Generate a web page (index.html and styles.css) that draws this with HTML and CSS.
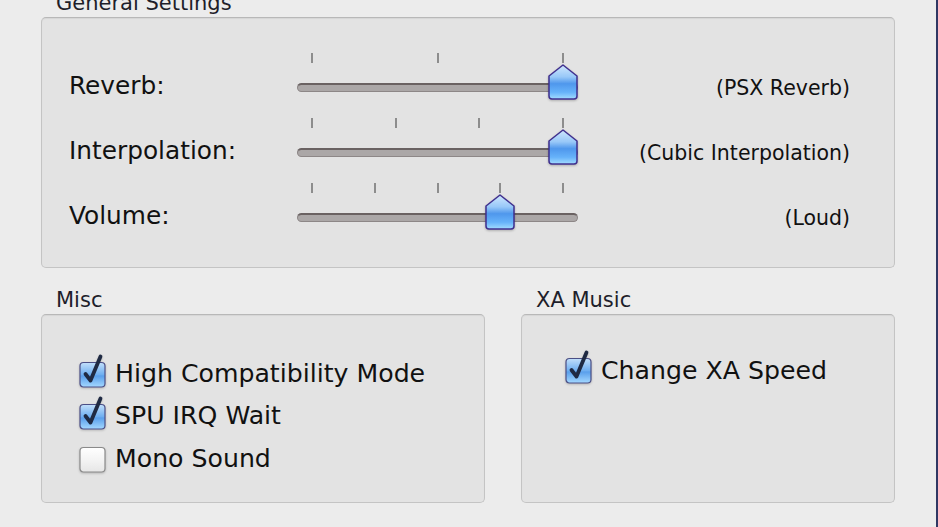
FILE: index.html
```html
<!DOCTYPE html>
<html>
<head>
<meta charset="utf-8">
<link rel="stylesheet" href="styles.css">
</head>
<body>
<div class="window">
  <section class="group">
    <div class="group-title">General Settings</div>
    <div class="box general">
      <div class="row">
        <div class="label">Reverb:</div>
        <div class="slider">
          <div class="ticks"><span></span><span></span><span></span></div>
          <div class="track"></div>
          <svg class="thumb" style="left:251px" viewBox="0 0 30 36" width="30" height="36"><use href="#thumb"/></svg>
        </div>
        <div class="value">(PSX Reverb)</div>
      </div>
      <div class="row">
        <div class="label">Interpolation:</div>
        <div class="slider">
          <div class="ticks"><span></span><span></span><span></span><span></span></div>
          <div class="track"></div>
          <svg class="thumb" style="left:251px" viewBox="0 0 30 36" width="30" height="36"><use href="#thumb"/></svg>
        </div>
        <div class="value">(Cubic Interpolation)</div>
      </div>
      <div class="row">
        <div class="label">Volume:</div>
        <div class="slider">
          <div class="ticks"><span></span><span></span><span></span><span></span><span></span></div>
          <div class="track"></div>
          <svg class="thumb" style="left:188.25px" viewBox="0 0 30 36" width="30" height="36"><use href="#thumb"/></svg>
        </div>
        <div class="value">(Loud)</div>
      </div>
    </div>
  </section>

  <div class="bottom">
    <section class="group">
      <div class="group-title">Misc</div>
      <div class="box misc">
        <div class="check"><svg class="cb" viewBox="0 0 27 27" width="27" height="27"><use href="#cb-on"/></svg><span>High Compatibility Mode</span></div>
        <div class="check"><svg class="cb" viewBox="0 0 27 27" width="27" height="27"><use href="#cb-on"/></svg><span>SPU IRQ Wait</span></div>
        <div class="check"><svg class="cb" viewBox="0 0 27 27" width="27" height="27"><use href="#cb-off"/></svg><span>Mono Sound</span></div>
      </div>
    </section>
    <section class="group">
      <div class="group-title">XA Music</div>
      <div class="box xa">
        <div class="check"><svg class="cb" viewBox="0 0 27 27" width="27" height="27"><use href="#cb-on"/></svg><span>Change XA Speed</span></div>
      </div>
    </section>
  </div>
</div>
<div class="desk-edge"></div>

<svg class="defs" width="0" height="0" aria-hidden="true">
  <defs>
    <linearGradient id="thumbGrad" x1="0" y1="0" x2="0" y2="1">
      <stop offset="0" stop-color="#d0e7fd"/>
      <stop offset="0.35" stop-color="#98c8f8"/>
      <stop offset="0.55" stop-color="#4f97ec"/>
      <stop offset="0.8" stop-color="#66b2fa"/>
      <stop offset="1" stop-color="#a3dcff"/>
    </linearGradient>
    <linearGradient id="cbGrad" x1="0" y1="0" x2="0" y2="1">
      <stop offset="0" stop-color="#c3e0fb"/>
      <stop offset="0.5" stop-color="#6eaef0"/>
      <stop offset="0.55" stop-color="#5a9feb"/>
      <stop offset="1" stop-color="#a4d8ff"/>
    </linearGradient>
    <linearGradient id="cbOffGrad" x1="0" y1="0" x2="0" y2="1">
      <stop offset="0" stop-color="#ffffff"/>
      <stop offset="0.5" stop-color="#f4f4f4"/>
      <stop offset="1" stop-color="#e6e6e6"/>
    </linearGradient>
    <g id="thumb">
      <path d="M15 1 L29 12 V32 Q29 35 26 35 H4 Q1 35 1 32 V12 Z" fill="url(#thumbGrad)" stroke="#3f2f8e" stroke-width="1.5" stroke-linejoin="round"/>
    </g>
    <g id="cb-on">
      <rect x="1" y="1.5" width="25" height="24.5" rx="3.5" fill="url(#cbGrad)" stroke="#4b4f86" stroke-width="1.2"/>
      <path d="M6.5 13 L11.5 19.5 L21.5 -4.5" fill="none" stroke="#1f2a43" stroke-width="3.8" stroke-linecap="round" stroke-linejoin="round"/>
    </g>
    <g id="cb-off">
      <rect x="1" y="1.5" width="25" height="24.5" rx="3.5" fill="url(#cbOffGrad)" stroke="#8a8a8a" stroke-width="1.2"/>
    </g>
  </defs>
</svg>
</body>
</html>
```
FILE: styles.css
```css
html, body {
  margin: 0;
  padding: 0;
  height: 100%;
}

body {
  display: flex;
  background: #ececec;
  font-family: "DejaVu Sans", Verdana, sans-serif;
  color: #111;
  overflow: hidden;
}

.window {
  flex: 1;
  margin-top: -11px;
  padding: 0 41px 0 41px;
  display: flex;
  flex-direction: column;
}

.desk-edge {
  width: 2px;
  background: #2f3763;
}

.defs {
  position: absolute;
  width: 0;
  height: 0;
}

.group {
  display: flex;
  flex-direction: column;
}

.group-title {
  font-size: 21px;
  line-height: 28px;
  height: 28px;
  padding-left: 15px;
  color: #1e1e2a;
  white-space: nowrap;
}

.box {
  background: #e3e3e3;
  border: 1px solid #c4c4c4;
  border-top-color: #b8b8b8;
  border-radius: 5px;
  box-shadow: inset 0 1px 1px rgba(0, 0, 0, 0.06);
}

.general {
  padding: 35px 44px 19px 27px;
}

.row {
  display: grid;
  grid-template-columns: 228px 281px 1fr;
  height: 65px;
}

.label {
  font-size: 24.8px;
  line-height: 30px;
  padding-top: 18px;
  white-space: nowrap;
}

.value {
  font-size: 20.5px;
  line-height: 30px;
  padding-top: 20px;
  text-align: right;
  white-space: nowrap;
}

.slider {
  position: relative;
  height: 65px;
}

.ticks {
  display: flex;
  justify-content: space-between;
  padding: 0 14px;
  height: 10px;
}

.ticks span {
  width: 2px;
  height: 10px;
  background: #8d8d8d;
}

.track {
  margin-top: 20px;
  height: 9px;
  box-sizing: border-box;
  border-radius: 5px;
  background: #aba7a7;
  border: 1px solid #8d8787;
  border-top: 2px solid #6a6262;
}

.thumb {
  position: absolute;
  top: 11px;
  overflow: visible;
  filter: drop-shadow(0 1px 1px rgba(0, 0, 0, 0.25));
}

.bottom {
  margin-top: 18px;
  display: grid;
  grid-template-columns: 444px 374px;
  column-gap: 36px;
}

.misc,
.xa {
  height: 189px;
  box-sizing: border-box;
}

.misc {
  padding: 39px 0 0 37px;
}

.xa {
  padding: 34.5px 0 0 43px;
}

.check {
  display: flex;
  align-items: center;
  height: 42.5px;
  font-size: 25.2px;
  line-height: 42.5px;
  white-space: nowrap;
}

.misc .check:first-child {
  height: 40px;
}

.misc .check:nth-child(2) {
  height: 44px;
}

.cb {
  flex: none;
  margin-right: 9px;
  overflow: visible;
  filter: drop-shadow(0 1px 1px rgba(0, 0, 0, 0.2));
}
```
